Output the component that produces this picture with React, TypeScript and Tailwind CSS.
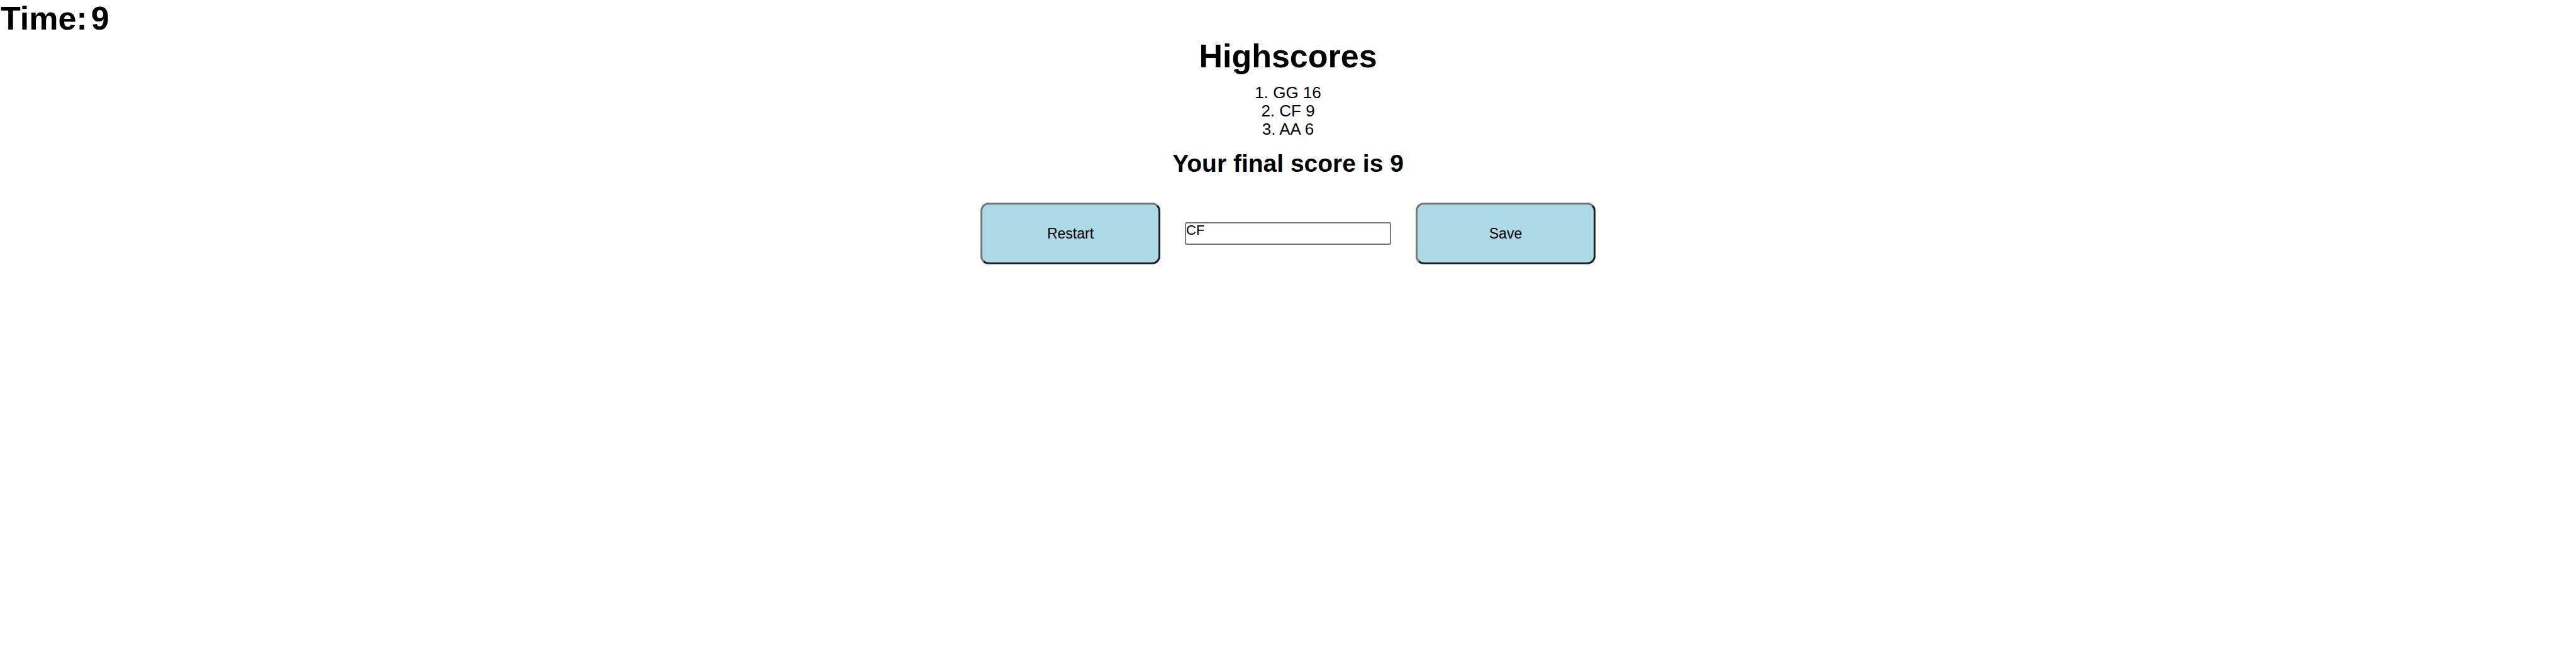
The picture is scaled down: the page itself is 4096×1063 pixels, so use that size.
import { useState } from "react";

const scores = [
  { name: "GG", points: 16 },
  { name: "CF", points: 9 },
  { name: "AA", points: 6 },
];

function GameButton({ label }: { label: string }) {
  return (
    <button
      type="button"
      className="h-[98px] w-[286px] rounded-[13px] border-3 border-t-[#767676] border-r-[#212121] border-b-[#212121] border-l-[#767676] bg-[#add8e6] text-[23px]"
    >
      {label}
    </button>
  );
}

export default function App() {
  const [initials, setInitials] = useState("CF");

  return (
    <div className="min-h-screen bg-white font-['Liberation_Sans',Arial,sans-serif] text-black">
      <header className="flex gap-1.5 pl-px text-[52px] leading-[58px] font-bold">
        <span>Time:</span>
        <span>9</span>
      </header>
      <main className="flex flex-col items-center pt-0.5">
        <h1 className="text-[52px] leading-[58px] font-bold">Highscores</h1>
        <ol className="mt-[15px] text-center text-[26px] leading-[29px]">
          {scores.map((score, index) => (
            <li key={score.name}>{`${index + 1}. ${score.name} ${score.points}`}</li>
          ))}
        </ol>
        <h2 className="mt-[18px] text-[39px] leading-[44px] font-bold">Your final score is 9</h2>
        <form className="mt-10 flex items-center gap-[39px]" onSubmit={(e) => e.preventDefault()}>
          <GameButton label="Restart" />
          <input
            type="text"
            aria-label="Initials"
            value={initials}
            onChange={(e) => setInitials(e.target.value)}
            className="h-9 w-[328px] rounded-[3px] border-2 border-[#767676] bg-white p-0 pb-2.5 text-[22px] leading-[22px]"
          />
          <GameButton label="Save" />
        </form>
      </main>
    </div>
  );
}
